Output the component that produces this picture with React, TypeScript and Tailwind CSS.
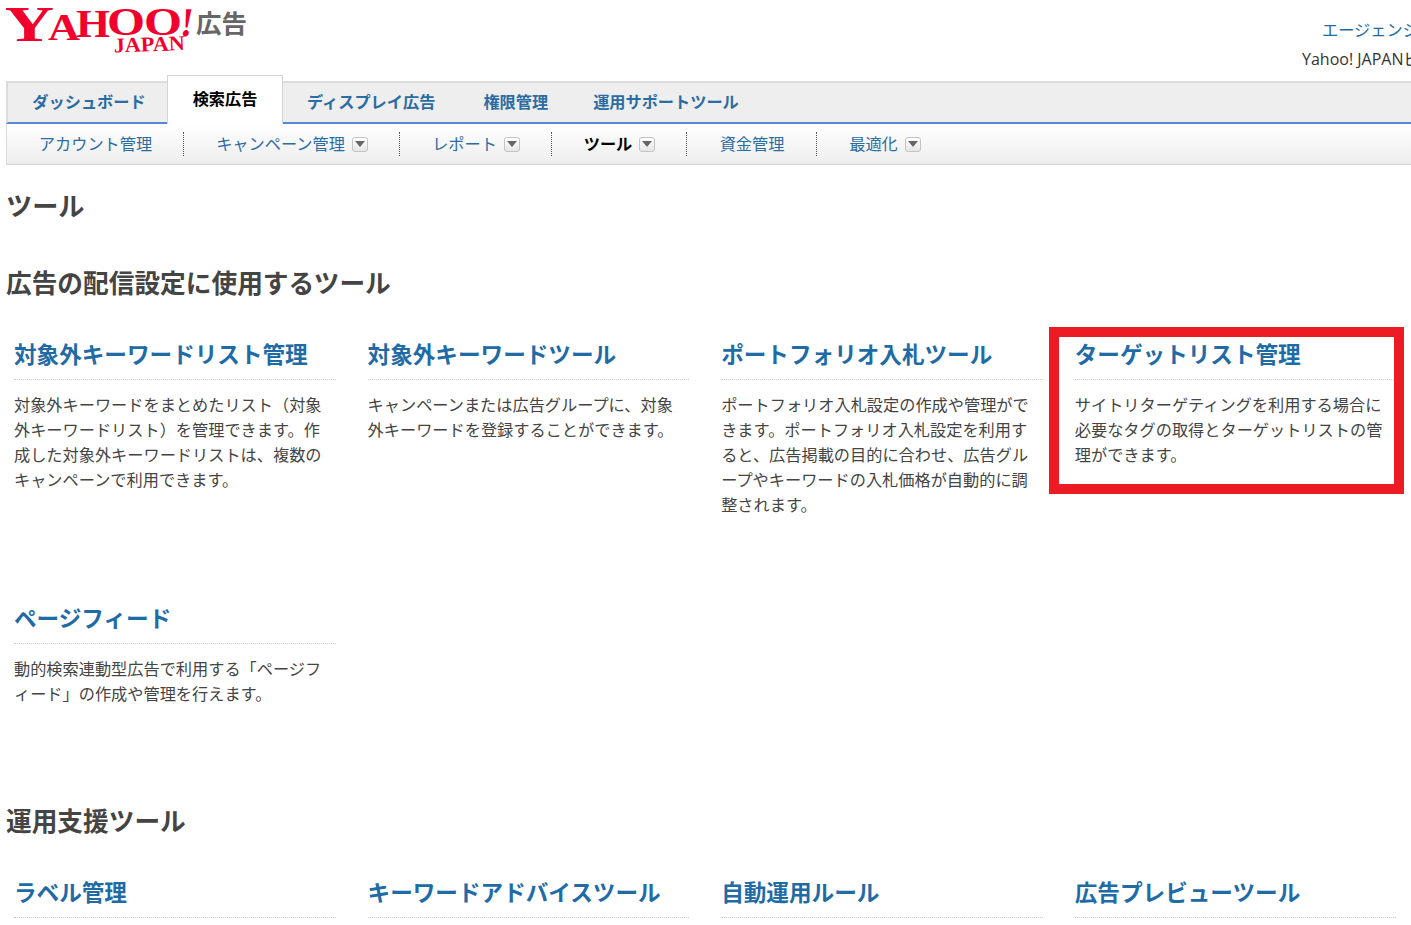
const font = "font-['Open_Sans','Noto_Sans_CJK_JP',sans-serif] [line-break:loose] [text-spacing-trim:space-all]";

function Logo() {
  return (
    <svg width="190" height="56" viewBox="0 0 190 56" className="shrink-0" fill="#f2002d" fontFamily="'Liberation Serif', serif" fontWeight="700">
      <text x="-2" y="41" fontSize="50" textLength="50" lengthAdjust="spacingAndGlyphs">Y</text>
      <text x="42" y="39.5" fontSize="37" textLength="32" lengthAdjust="spacingAndGlyphs">A</text>
      <text x="70" y="37" fontSize="41" textLength="34" lengthAdjust="spacingAndGlyphs">H</text>
      <text x="101" y="35" fontSize="41" textLength="38" lengthAdjust="spacingAndGlyphs">O</text>
      <text x="138" y="35" fontSize="41" textLength="38" lengthAdjust="spacingAndGlyphs">O</text>
      <text x="174" y="36" fontSize="41" textLength="12" lengthAdjust="spacingAndGlyphs" transform="skewX(-7) translate(4 0)">!</text>
      <text x="108" y="52.5" fontSize="21" textLength="71" lengthAdjust="spacingAndGlyphs" transform="rotate(-2 108 52)">JAPAN</text>
    </svg>
  );
}

function Caret() {
  return (
    <span className="ml-[7px] flex h-[15px] w-[16px] shrink-0 items-center justify-center rounded-[3px] border border-[#c4c4c4] bg-gradient-to-b from-white to-[#e6e6e6]">
      <svg width="10" height="6" viewBox="0 0 10 6">
        <path d="M0 0h10L5 6z" fill="#666" />
      </svg>
    </span>
  );
}

function SubItem({ label, width, caret, active, last }: { label: string; width: number; caret?: boolean; active?: boolean; last?: boolean }) {
  return (
    <div
      className={`flex h-[24px] items-center justify-center ${last ? "" : "pl-[1px] border-r border-dotted border-[#555]"}`}
      style={{ width }}
    >
      <span className={active ? "font-bold text-black text-[16.2px]" : "text-[#2b6ca3] text-[16.2px]"}>{label}</span>
      {caret && <Caret />}
    </div>
  );
}

function Tool({ title, desc }: { title: string; desc?: string }) {
  return (
    <div className="px-[8px] pr-[24px]">
      <h3 className="h-[50px] border-b border-dotted border-[#ccc] text-[22.6px] font-bold leading-[50px] whitespace-nowrap text-[#1f6ba6]">{title}</h3>
      {desc && <p className="mt-[12.5px] text-[16.2px] leading-[25px] whitespace-pre-line text-[#444]">{desc}</p>}
    </div>
  );
}

export default function App() {
  return (
    <div lang="ja" className={`relative h-[925px] w-[1411px] overflow-hidden bg-white pl-[6px] ${font}`}>
      {/* Header */}
      <div className="relative h-[81px]">
        <div className="absolute left-0 top-0 flex items-start">
          <Logo />
          <span className="mt-[8px] text-[25.5px] font-bold leading-[30px] text-[#666]">広告</span>
        </div>
        <div className="absolute right-0 top-[20px] w-[89px] overflow-hidden text-[16.2px] leading-[20px] whitespace-nowrap text-[#1f6ba6]">エージェンシーツール</div>
        <div className="absolute right-0 top-[49px] w-[109px] overflow-hidden text-[16px] leading-[20px] whitespace-nowrap text-[#333]">Yahoo! JAPANビジネス</div>
      </div>

      {/* Main tabs */}
      <div className="relative flex h-[43px] w-[1405px] items-stretch border-t-2 border-t-[#dcdcdc] border-l-2 border-l-[#dcdcdc] bg-[#eeeeee] border-b-2 border-b-[#5585d5] text-[16.2px] font-bold text-[#2b6ca3]">
        <div className="flex w-[159px] items-center justify-center pl-[3px]">ダッシュボード</div>
        <div className="relative -mt-[8px] -mb-[2px] flex w-[116px] items-center justify-center border-x border-t border-[#d4d4d4] bg-white pb-[2px] text-black">検索広告</div>
        <div className="ml-[24px] flex items-center">ディスプレイ広告</div>
        <div className="ml-[48px] flex items-center">権限管理</div>
        <div className="ml-[45px] flex items-center">運用サポートツール</div>
      </div>

      {/* Sub navigation */}
      <div className="flex h-[41px] w-[1405px] items-center border-b border-b-[#d4d4d4] border-l border-l-[#dcdcdc] bg-gradient-to-b from-white to-[#eeeeee]">
        <SubItem label="アカウント管理" width={177} />
        <SubItem label="キャンペーン管理" width={216} caret />
        <SubItem label="レポート" width={152} caret />
        <SubItem label="ツール" width={135} caret active />
        <SubItem label="資金管理" width={130} />
        <SubItem label="最適化" width={136} caret last />
      </div>

      {/* Content */}
      <h1 className="mt-[23px] text-[26.2px] font-bold leading-[36px] text-[#444]">ツール</h1>
      <h2 className="mt-[42px] text-[25.7px] font-bold leading-[36px] text-[#444]">広告の配信設定に使用するツール</h2>

      <div className="mt-[28px] grid w-[1415px] grid-cols-[353.6px_353.6px_353.6px_353.6px]">
        <div className="h-[264px]">
          <Tool title="対象外キーワードリスト管理" desc="対象外キーワードをまとめたリスト（対象外キーワードリスト）を管理できます。作成した対象外キーワードリストは、複数のキャンペーンで利用できます。" />
        </div>
        <Tool title="対象外キーワードツール" desc={"キャンペーンまたは広告グループに、対象\n外キーワードを登録することができます。"} />
        <Tool title="ポートフォリオ入札ツール" desc="ポートフォリオ入札設定の作成や管理ができます。ポートフォリオ入札設定を利用すると、広告掲載の目的に合わせ、広告グループやキーワードの入札価格が自動的に調整されます。" />
        <Tool title="ターゲットリスト管理" desc="サイトリターゲティングを利用する場合に必要なタグの取得とターゲットリストの管理ができます。" />
        <Tool title="ページフィード" desc="動的検索連動型広告で利用する「ページフィード」の作成や管理を行えます。" />
      </div>

      <h2 className="mt-[97px] text-[25.7px] font-bold leading-[36px] text-[#444]">運用支援ツール</h2>

      <div className="mt-[28px] grid w-[1415px] grid-cols-[353.6px_353.6px_353.6px_353.6px]">
        <Tool title="ラベル管理" />
        <Tool title="キーワードアドバイスツール" />
        <Tool title="自動運用ルール" />
        <Tool title="広告プレビューツール" />
      </div>

      {/* Annotation */}
      <div className="absolute left-[1049px] top-[327px] h-[167px] w-[355px] border-[10px] border-[#ed1c24]" />
    </div>
  );
}
